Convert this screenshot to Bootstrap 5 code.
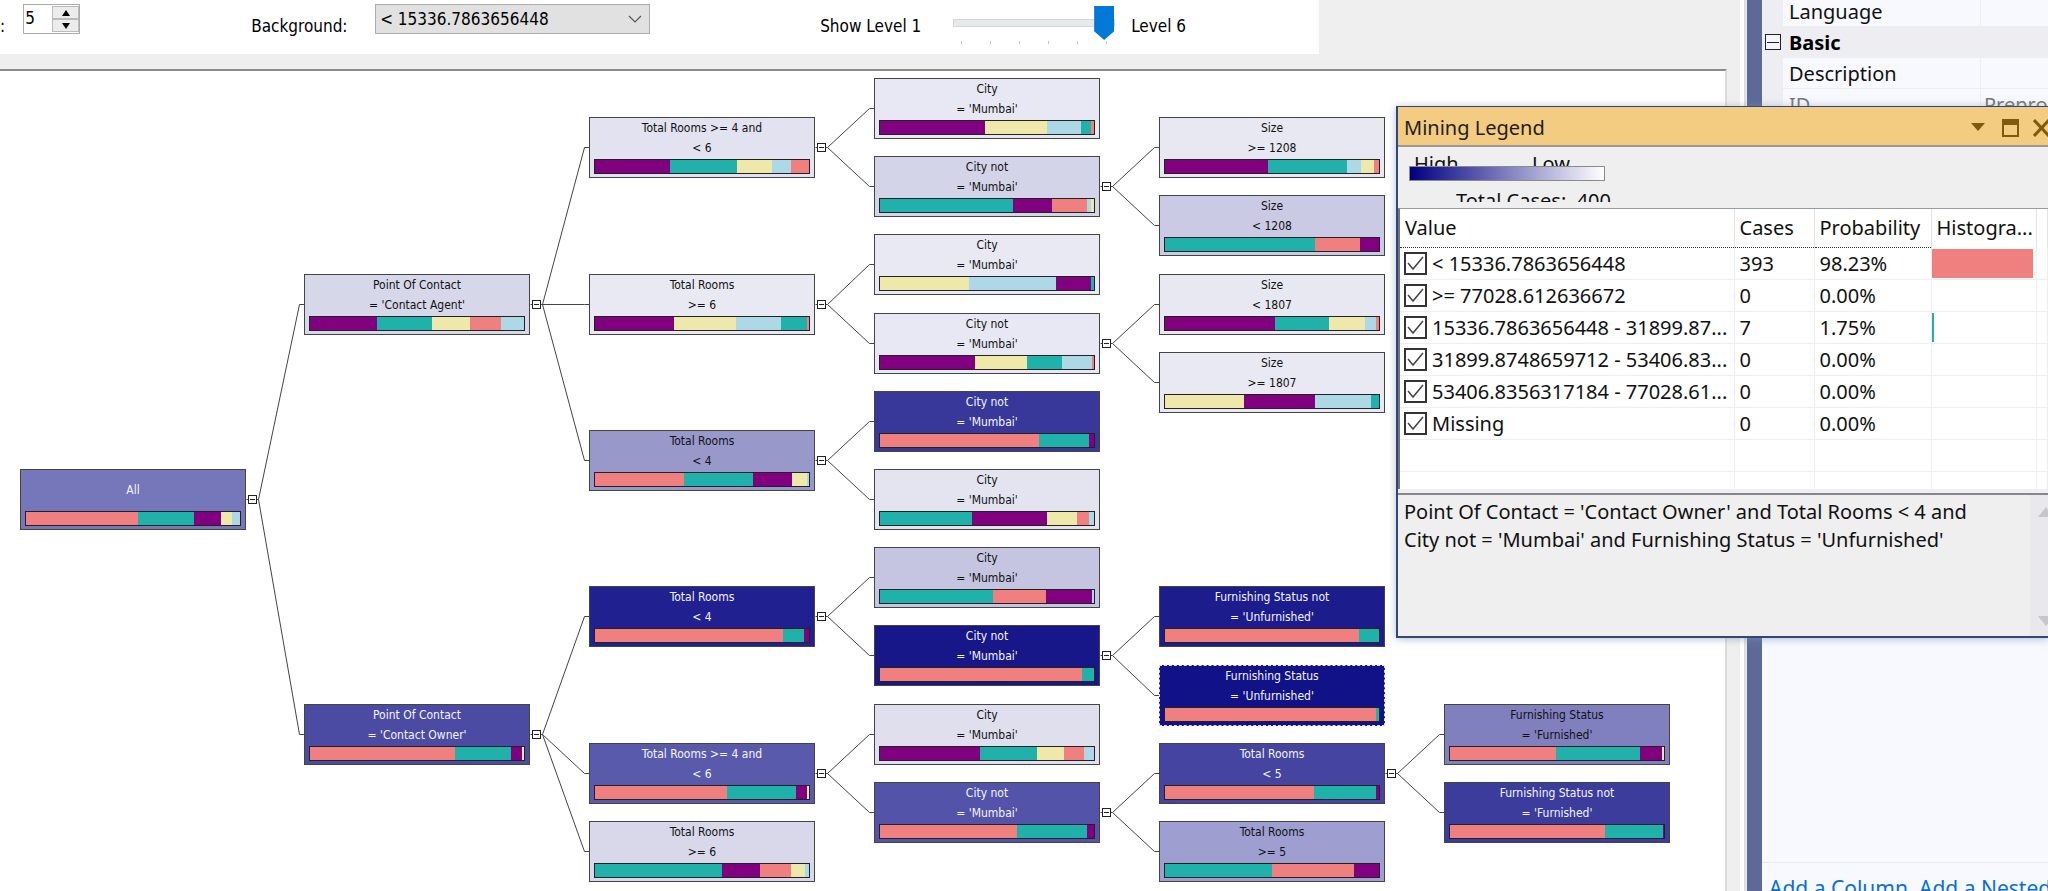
<!DOCTYPE html>
<html lang="en">
<head>
<meta charset="utf-8">
<meta name="viewport" content="width=device-width, initial-scale=1">
<title>Decision tree viewer</title>
<link rel="stylesheet" href="https://cdn.jsdelivr.net/npm/bootstrap@5.3.0/dist/css/bootstrap.min.css">
<style>
  body { font-family: "Noto Sans", "Open Sans", sans-serif; font-size: 20px; line-height: 28px; color: #111; background: #efefef; }
  .tahoma { font-family: "DejaVu Sans Condensed", "DejaVu Sans", sans-serif; }

  /* toolbar */
  .toolbar { width: 1319px; height: 54px; font-size: 17px; line-height: 24px; color: #000; }
  .toolbar-label { padding-top: 14px; }
  .control-top { margin-top: 4px; }
  .spinner { width: 57px; height: 30px; margin-left: 18px; border: 1px solid #ababab; background: #fff; }
  .spinner input { width: 27px; border: 0; padding: 0 0 2px 1px; outline: 0; }
  .spinner button { width: 27px; height: 13px; padding: 0; border: 1px solid #bbb; background: #ececec; display: flex; align-items: center; justify-content: center; }
  .score-select { width: 275px; height: 30px; padding: 0 4px; color: #000; border: 1px solid #adadad; border-radius: 0; appearance: none;
    background: #e1e1e1 url("data:image/svg+xml,%3Csvg xmlns='http://www.w3.org/2000/svg' width='14' height='8'%3E%3Cpath d='M1 1l6 6 6-6' fill='none' stroke='%23555' stroke-width='1.2'/%3E%3C/svg%3E") no-repeat right 7px center; }
  .bg-label { margin-left: 171px; width: 124px; }
  .lvl-label { margin-left: 170px; width: 133px; }
  .end-label { margin-left: 16px; }
  .level-slider { width: 162px; padding-top: 6px; }
  .level-slider input { appearance: none; width: 100%; height: 34px; margin: 0; background: transparent; display: block; }
  .level-slider input::-webkit-slider-runnable-track { height: 8px; background: #e7eaea; border: 1px solid #d6d6d6; }
  .level-slider input::-webkit-slider-thumb { appearance: none; width: 20px; height: 34px; margin-top: -14px; background: #0078d7; clip-path: polygon(0 0, 100% 0, 100% 74%, 50% 100%, 0 74%); }
  .ticks { margin: 1px 8px 0; }
  .ticks i { width: 1px; height: 3px; background: #c4c4c4; }
  .toolbar-gap { height: 15px; }

  /* tree canvas */
  .tree-frame { border-top: 2px solid #8a8a8a; border-right: 2px solid #dcdcdc; margin-right: 13px; background: #fff; }
  .tree-node { position: absolute; width: 226px; height: 61px; border: 1px solid #444; padding: 0 4px; font-size: 12px; line-height: 20px; text-align: center; color: #111; white-space: nowrap; }
  .tree-node.on-dark { color: #f4f4fa; }
  .tree-node.selected { border-style: dashed; border-color: #ddd; }
  .node-text { height: 39px; }
  .node-bar { height: 15px; margin-top: 2px; border: 1px solid #222; display: flex; }
  .toggle { position: absolute; width: 9px; height: 9px; padding: 0; border: 1px solid #222; background: linear-gradient(#222, #222) center / 5px 1px no-repeat #fff; }
  .links { position: absolute; inset: 0; }

  /* properties pane */
  .props { width: 301px; background: #f8f9ff; border-left: 15px solid #5d6a98; }
  .pane-gap { width: 7px; background: linear-gradient(90deg, #fff 4px, #d8d8da 4px, #ececee 7px); }
  .prop-grid { display: grid; grid-template-columns: 21px 197px 1fr; margin-top: -4px; }
  .prop-grid > * { height: 31px; border-bottom: 1px solid #eeeef2; padding: 2px 0 0 6px; }
  .prop-grid > .gutter { background: #eeeef2; padding: 0; }
  .prop-grid > .prop-value { border-left: 1px solid #eeeef2; padding-left: 3px; }
  .group-row { background: #eeeef2; color: #000; }
  .muted-text { color: #777; }
  .expander { width: 16px; height: 16px; padding: 0; border: 1px solid #222; background: linear-gradient(#222, #222) center / 12px 1px no-repeat #f5f5f7; }
  .commands { border-top: 1px solid #e8e8ee; height: 29px; padding: 11px 0 0 7px; font-size: 21px; overflow: hidden; white-space: nowrap; color: #0a6fd4; }
  .commands a { color: #0a6fd4; text-decoration: none; }

  /* legend window */
  .legend { position: absolute; top: 106px; right: 0; width: 652px; height: 532px; background: #efefef; border: 1px solid #2f4779; border-width: 1px 0 2px 2px; box-shadow: 0 1px 8px #7d93bb99; }
  .legend-title { height: 40px; background: #f3cc82; border-bottom: 2px solid #95999f; color: #1e1e1e; padding: 3px 0 0 6px; }
  .legend-title button { padding: 0; border: 0; background: none; display: flex; }
  .legend-title .close-btn { margin-left: 14px; width: 15px; overflow: hidden; }
  .scale-block { height: 61px; }
  .scale-labels { height: 12px; padding-left: 16px; margin-top: 7px; overflow: hidden; line-height: 20px; }
  .scale-labels span { width: 118px; }
  .gradient-bar { width: 196px; height: 15px; margin-left: 11px; border: 1px solid #8a8a8a; background: linear-gradient(90deg, #000080, #fff); }
  .total-line { margin: 10px 0 0 58px; height: 11px; line-height: 20px; overflow: hidden; }
  .legend-list { height: 281px; overflow: hidden; border-top: 1px solid #999ca3; border-left: 2px solid #6f7480; background: #fff; }
  .legend-list table { table-layout: fixed; width: 100%; }
  .legend-list th { height: 37px; padding: 0 5px; font-weight: 400; line-height: 38px; border-right: 1px solid #e3e3e3; white-space: nowrap; }
  .legend-list td { height: 32px; padding: 0 5px; line-height: 31px; border-right: 1px solid #eee; border-bottom: 1px solid #eee; white-space: nowrap; overflow: hidden; }
  .legend-list tr.current td:nth-child(-n+3) { border-top: 1px dotted #333; }
  .legend-list td.histo { padding: 0; }
  .histo div { height: 29px; }
  .legend-list input { appearance: none; width: 23px; height: 23px; margin: 0; border: 2px solid #333; flex: none;
    background: #fff url("data:image/svg+xml,%3Csvg xmlns='http://www.w3.org/2000/svg' width='19' height='19'%3E%3Cpath d='M2 9l5 6 10-12' fill='none' stroke='%23444' stroke-width='1.5'/%3E%3C/svg%3E") center no-repeat; }
  .legend-list label { display: flex; align-items: center; gap: 5px; margin-left: -1px; height: 30px; }
  .legend-rule { border-top: 2px solid #85878c; margin-top: 4px; height: 143px; }
  .legend-path { padding: 3px 0 0 6px; }
  .legend-scroll { width: 18px; background: #e9e9ed; padding: 12px 0 10px 8px; overflow: hidden; }
</style>
</head>
<body class="vh-100 overflow-hidden position-relative d-flex">

<main class="flex-grow-1 d-flex flex-column tahoma">
  <div class="toolbar bg-white d-flex align-items-start flex-shrink-0">
    <label class="toolbar-label" for="levels">:</label>
    <div class="spinner control-top d-flex justify-content-between">
      <input id="levels" type="text" value="5">
      <div class="d-flex flex-column justify-content-center">
        <button type="button" aria-label="Increase"><svg width="8" height="6"><path d="M0 6h8L4 0z"/></svg></button>
        <button type="button" aria-label="Decrease"><svg width="8" height="6"><path d="M0 0h8L4 6z"/></svg></button>
      </div>
    </div>
    <label class="toolbar-label bg-label" for="score">Background:</label>
    <select id="score" class="score-select control-top"><option>&lt; 15336.7863656448</option></select>
    <label class="toolbar-label lvl-label" for="level">Show Level 1</label>
    <div class="level-slider">
      <input id="level" type="range" min="1" max="6" value="6">
      <div class="ticks d-flex justify-content-between"><i></i><i></i><i></i><i></i><i></i><i></i></div>
    </div>
    <span class="toolbar-label end-label">Level 6</span>
  </div>
  <div class="toolbar-gap flex-shrink-0"></div>
  <div class="tree-frame flex-grow-1 position-relative overflow-hidden" id="tree">
    <svg class="links w-100 h-100"><g id="links" transform="translate(.5 .5)" fill="none" stroke="#444"></g></svg>
  </div>
</main>

<div class="pane-gap"></div>
<aside class="props d-flex flex-column flex-shrink-0">
  <div class="prop-grid">
    <div class="gutter"></div><div>Language</div><div class="prop-value"></div>
    <div class="gutter d-flex align-items-center justify-content-center"><button class="expander" type="button" aria-label="Collapse Basic"></button></div><div class="group-row fw-bold">Basic</div><div class="group-row"></div>
    <div class="gutter"></div><div>Description</div><div class="prop-value"></div>
    <div class="gutter"></div><div class="muted-text">ID</div><div class="prop-value muted-text">Preproc</div>
  </div>
  <div class="commands mt-auto"><a href="#">Add a Column</a>, <a href="#">Add a Nested</a></div>
</aside>

<section class="legend" aria-label="Mining Legend">
  <header class="legend-title d-flex align-items-center">
    <span class="flex-grow-1">Mining Legend</span>
    <button type="button" aria-label="Menu"><svg width="16" height="9"><path d="M1 0h14L8 8z" fill="#7d5a0c"/></svg></button>
    <button type="button" class="ms-3" aria-label="Maximize"><svg width="17" height="18"><path d="M1 1h15v16H1z" fill="none" stroke="#7d5a0c" stroke-width="2"/><path d="M0 0h17v6H0z" fill="#7d5a0c"/></svg></button>
    <button type="button" class="close-btn" aria-label="Close"><svg width="18" height="18" class="flex-shrink-0"><path d="M1 1l15 16M16 1L1 17" stroke="#7d5a0c" stroke-width="3"/></svg></button>
  </header>
  <div class="scale-block d-flex flex-column">
    <div class="scale-labels d-flex"><span>High</span><span>Low</span></div>
    <div class="gradient-bar"></div>
    <div class="total-line">Total Cases:&nbsp; 400</div>
  </div>
  <div class="legend-list">
    <table>
      <colgroup><col style="width:334px"><col style="width:80px"><col style="width:117px"><col style="width:105px"><col></colgroup>
      <thead><tr><th>Value</th><th>Cases</th><th>Probability</th><th>Histogra...</th><th></th></tr></thead>
      <tbody id="rows"></tbody>
    </table>
  </div>
  <div class="legend-rule d-flex">
    <p class="flex-grow-1 m-0 legend-path">Point Of Contact = 'Contact Owner' and Total Rooms &lt; 4 and<br>City not = 'Mumbai' and Furnishing Status = 'Unfurnished'</p>
    <div class="legend-scroll d-flex flex-column justify-content-between">
      <svg width="16" height="10"><path d="M0 10h16L8 0z" fill="#c6c6cd"/></svg>
      <svg width="16" height="10"><path d="M0 0h16L8 10z" fill="#c6c6cd"/></svg>
    </div>
  </div>
</section>

<script>
const COLORS = { S: '#f08080', T: '#20b2aa', P: '#800080', Y: '#eee8aa', B: '#add8e6' };
// column, half-row, background, tone (0 dark text, 1 light text, 2 selected), two lines, share of each state, children
const M = "= 'Mumbai'";
const root = [0,10,'#7676ba',1,'','All','S318 T158 P75 Y32 B22',[
  [1,5,'#d7d7ea',0,'Point Of Contact',"= 'Contact Agent'",'P189 T156 Y106 S88 B64',[
    [2,1,'#e2e2f0',0,'Total Rooms >= 4 and','< 6','P213 T188 Y99 B55 S50',[
      [3,0,'#e8e8f4',0,'City',M,'P296 Y174 B96 T29 S8'],
      [3,2,'#d4d4e9',0,'City not',M,'T375 P111 S99 B11 Y8',[
        [4,1,'#e8e8f2',0,'Size','>= 1208','P313 T238 B42 Y41 S14'],
        [4,3,'#cacae5',0,'Size','< 1208','T453 S138 P56']]]]],
    [2,5,'#e9e9f4',0,'Total Rooms','>= 6','P223 Y175 B127 T74 S6',[
      [3,4,'#e9e9f4',0,'City',M,'Y252 B245 P99 T8'],
      [3,6,'#e8e8f4',0,'City not',M,'P267 Y149 T99 B83 S6',[
        [4,5,'#e8e8f2',0,'Size','< 1807','P331 T164 Y108 B33 S10'],
        [4,7,'#e9e9f4',0,'Size','>= 1807','Y238 P216 B169 T24']]]]],
    [2,9,'#9898cb',0,'Total Rooms','< 4','S253 T195 P109 Y41 B7',[
      [3,8,'#38389b',1,'City not',M,'S448 T141 P15'],
      [3,10,'#e4e4f1',0,'City',M,'T260 P211 Y84 S34 B15']]]]],
  [1,16,'#4b4ba4',1,'Point Of Contact',"= 'Contact Owner'",'S437 T169 P33 Y6',[
    [2,13,'#202090',1,'Total Rooms','< 4','S532 T60 P13',[
      [3,12,'#c5c5e1',0,'City',M,'T319 S149 P131 B5'],
      [3,14,'#171789',1,'City not',M,'S571 T33',[
        [4,13,'#1c1c8d',1,'Furnishing Status not',"= 'Unfurnished'",'S511 T53'],
        [4,15,'#111188',2,'Furnishing Status',"= 'Unfurnished'",'S555 T9']]]]],
    [2,17,'#5a5aac',1,'Total Rooms >= 4 and','< 6','S374 T195 P30 Y6',[
      [3,16,'#dfdfee',0,'City',M,'P283 T161 Y74 S57 B29'],
      [3,18,'#5353a9',1,'City not',M,'S387 T197 P20',[
        [4,17,'#4545a1',1,'Total Rooms','< 5','S393 T162 P9',[
          [5,16,'#8080bf',0,'Furnishing Status',"= 'Furnished'",'S280 T222 P57 Y5'],
          [5,18,'#3c3c9d',1,'Furnishing Status not',"= 'Furnished'",'S409 T152 P3']]],
        [4,19,'#9e9ed0',0,'Total Rooms','>= 5','T283 S215 P66']]]]],
    [2,19,'#d8d8ea',0,'Total Rooms','>= 6','T359 P108 S88 Y38 B12']]]]];

const tree = document.getElementById('tree'), links = document.getElementById('links');
const px = col => 20 + Math.floor(col * 284.8), py = row => 7 + Math.round(row * 39.1);
function add(cls, x, y, tag = 'div') {
  const e = document.createElement(tag);
  e.className = cls; e.style.left = x + 'px'; e.style.top = y + 'px';
  return tree.appendChild(e);
}
function draw([col, row, bg, tone, a, b, shares, kids = []]) {
  const x = px(col), y = py(row), mid = y + 30;
  const n = add('tree-node' + (tone ? ' on-dark' : '') + (tone === 2 ? ' selected' : ''), x, y);
  n.style.background = bg;
  const t = document.createElement('div');
  t.className = 'node-text d-flex flex-column justify-content-center';
  for (const s of [a, b]) if (s) t.appendChild(document.createElement('span')).textContent = s;
  const bar = document.createElement('div');
  bar.className = 'node-bar';
  for (const s of shares.split(' ')) {
    const seg = bar.appendChild(document.createElement('div'));
    seg.style.flex = s.slice(1) + ' 1 0';
    seg.style.background = COLORS[s[0]];
  }
  n.append(t, bar);
  if (!kids.length) return;
  let d = `M${x + 226} ${mid}H${x + 238}`;
  for (const k of kids) {
    const kx = px(k[0]), ky = py(k[1]) + 30;
    d += `M${x + 238} ${mid}L${kx - 5} ${ky}H${kx}`;
    draw(k);
  }
  const p = document.createElementNS('http://www.w3.org/2000/svg', 'path');
  p.setAttribute('d', d); links.appendChild(p);
  const g = add('toggle', x + 228, mid - 4, 'button');
  g.type = 'button'; g.setAttribute('aria-label', 'Collapse');
}
draw(root);

const rows = [['< 15336.7863656448', 393, '98.23%', 101, 'S'], ['>= 77028.612636672', 0, '0.00%'],
  ['15336.7863656448 - 31899.87...', 7, '1.75%', 2, 'T'], ['31899.8748659712 - 53406.83...', 0, '0.00%'],
  ['53406.8356317184 - 77028.61...', 0, '0.00%'], ['Missing', 0, '0.00%'], null, null];
document.getElementById('rows').innerHTML = rows.map((r, i) => r
  ? `<tr${i ? '' : ' class="current"'}><td><label><input type="checkbox" checked>${r[0].replace('<', '&lt;')}</label></td><td>${r[1]}</td><td>${r[2]}</td><td class="histo">${r[3] ? `<div style="width:${r[3]}px;background:${COLORS[r[4]]}"></div>` : ''}</td><td></td></tr>`
  : '<tr><td></td><td></td><td></td><td></td><td></td></tr>').join('');
</script>
<script src="https://cdn.jsdelivr.net/npm/bootstrap@5.3.0/dist/js/bootstrap.bundle.min.js"></script>
</body>
</html>
